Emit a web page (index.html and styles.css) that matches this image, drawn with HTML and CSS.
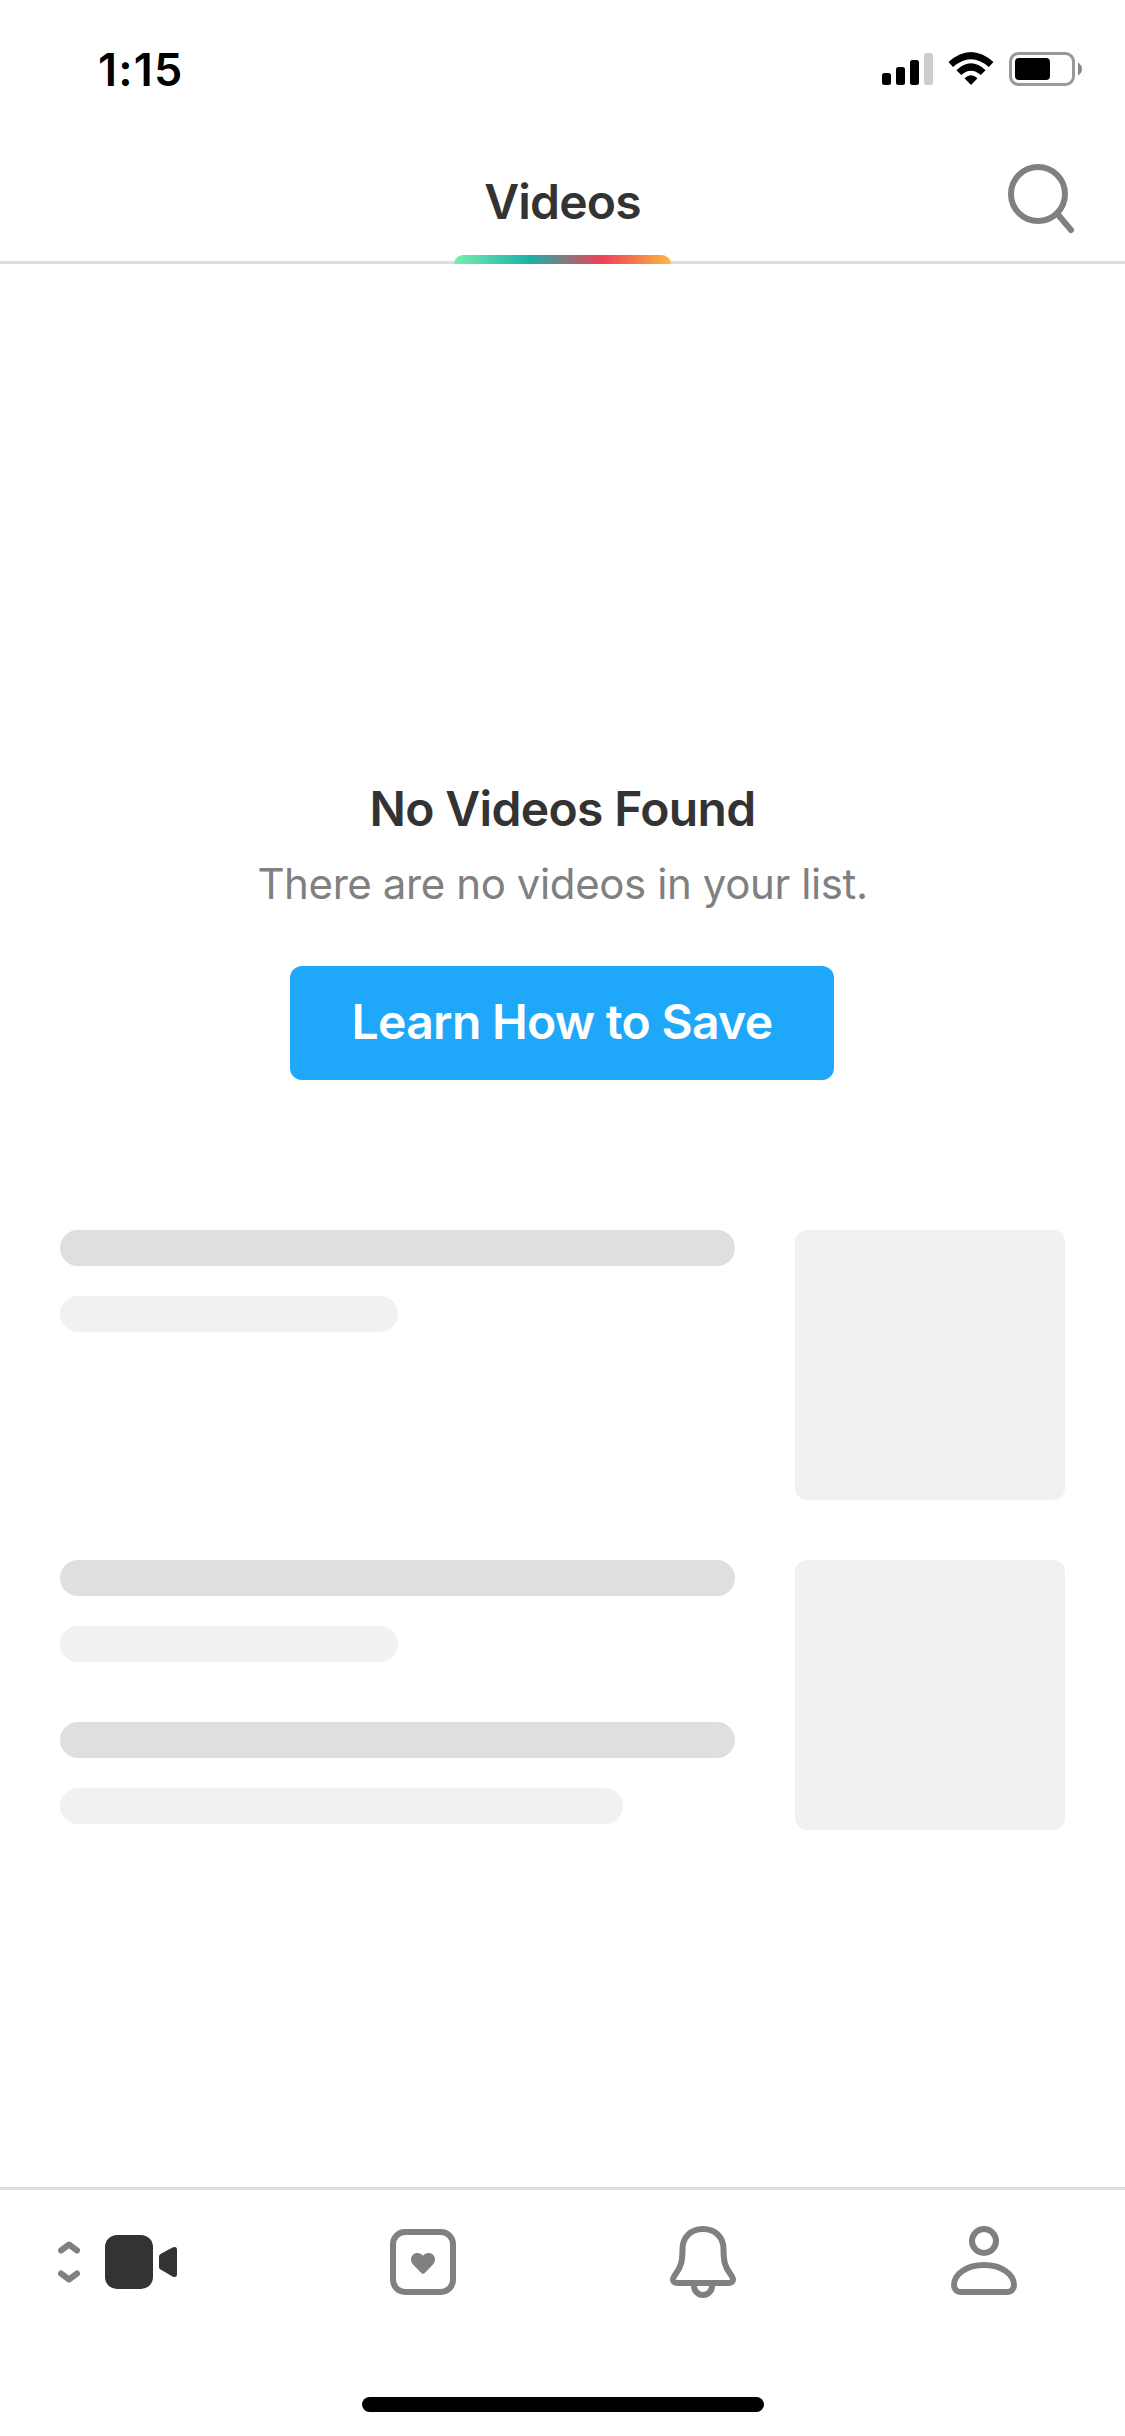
FILE: index.html
```html
<!DOCTYPE html>
<html lang="en">
<head>
<meta charset="utf-8">
<title>Videos</title>
<link rel="stylesheet" href="styles.css">
</head>
<body>
<div class="screen">
  <div class="status">
    <span class="time">1:15</span>
    <svg class="indicators" width="200" height="34" viewBox="882 52 200 34">
      <rect x="882" y="73" width="9" height="12" rx="2.5"/>
      <rect x="896" y="67" width="9" height="18" rx="2.5"/>
      <rect x="910" y="60" width="9" height="25" rx="2.5"/>
      <rect x="924" y="53" width="9" height="32" rx="2.5" fill="#ccc"/>
      <path d="M948.5 62Q970.8 42 993.5 62L988.8 67Q971 51.500 953 67ZM956.500 70.200Q971 56.500 985.500 70.200L980.800 75Q971 66.500 961.200 75ZM964.500 78.200Q971 72.500 977.500 78.200L971 85Z"/>
      <rect x="1010.500" y="53.500" width="63" height="31" rx="8" fill="none" stroke="#999" stroke-width="3"/>
      <rect x="1015" y="58" width="35" height="22" rx="4"/>
      <path d="M1078 62.500Q1082 65 1082 69T1078 75.500Z" fill="#888"/>
    </svg>
  </div>
  <header class="header">
    <h1 class="tab">Videos</h1>
    <svg class="search" width="72" height="72" viewBox="1005 162 72 72">
      <circle cx="1038" cy="194" r="27"/>
      <path d="M1057 213.500L1071 230"/>
    </svg>
  </header>
  <main class="content">
    <h2 class="empty-title">No Videos Found</h2>
    <p class="empty-text">There are no videos in your list.</p>
    <button class="learn"><span class="learn-label">Learn How to Save</span></button>
    <div class="skeletons">
      <div class="item">
        <div class="lines"><i class="line dark"></i><i class="line half"></i></div>
        <div class="thumb"></div>
      </div>
      <div class="item">
        <div class="lines"><i class="line dark"></i><i class="line half"></i><i class="line dark second"></i><i class="line long"></i></div>
        <div class="thumb"></div>
      </div>
    </div>
  </main>
  <nav class="nav">
    <a class="nav-item first">
      <svg width="120" height="72" viewBox="58 2226 120 72">
        <path class="stroke" d="M61 2250.500L69 2244.500L77 2250.500M61 2273.500L69 2279.500L77 2273.500"/>
        <rect x="105" y="2235" width="48" height="54" rx="12" fill="#333"/>
        <path d="M160.500 2254L173 2247.300Q177 2246 177 2250V2274Q177 2278 173 2276.700L160.500 2269.500Q159 2268.500 159 2267V2256.500Q159 2255 160.500 2254Z" fill="#333"/>
      </svg>
    </a>
    <a class="nav-item">
      <svg width="66" height="72" viewBox="390 2226 66 72">
        <rect class="stroke" x="393" y="2232" width="60" height="60" rx="12"/>
        <path d="M423 2273.700Q421.800 2273.700 421 2272.800L412.800 2264.200C410.500 2261.500 410.400 2257.500 412.800 2255C415.600 2252.200 420.300 2252.400 423 2255.700C425.700 2252.400 430.400 2252.200 433.200 2255C435.600 2257.500 435.500 2261.500 433.200 2264.200L425 2272.800Q424.200 2273.700 423 2273.700Z" fill="#808080"/>
      </svg>
    </a>
    <a class="nav-item">
      <svg width="66" height="72" viewBox="670 2226 66 72">
        <path class="stroke" d="M703 2229C690 2229 682.500 2238 682.500 2249C682.500 2261 681 2267 676 2273.500C674.500 2275.500 673 2277.500 673 2279.500C673 2281.500 674.500 2283 677 2283H729C731.500 2283 733 2281.500 733 2279.500C733 2277.500 731.500 2275.500 730 2273.500C725 2267 723.500 2261 723.500 2249C723.500 2238 716 2229 703 2229Z"/>
        <path class="stroke" d="M694 2283V2286A9 9 0 0 0 712 2286V2283"/>
      </svg>
    </a>
    <a class="nav-item">
      <svg width="66" height="72" viewBox="951 2226 66 72">
        <circle class="stroke" cx="984" cy="2241" r="12"/>
        <path class="stroke" d="M960 2292H1008C1011 2292 1014 2289 1014 2285C1014 2274 1001 2265 984 2265S954 2274 954 2285C954 2289 957 2292 960 2292Z"/>
      </svg>
    </a>
  </nav>
  <div class="home"></div>
</div>
</body>
</html>
```
FILE: styles.css
```css
* { box-sizing: border-box; }
body { margin: 0; background: #fff; font-family: Inter, "Liberation Sans", sans-serif; color: #333; }
.screen { width: 1125px; height: 2436px; display: flex; flex-direction: column; background: #fff; }
.status { height: 138px; display: flex; justify-content: space-between; align-items: center; padding: 0 43px 0 98px; color: #000; }
.time { font-size: 45px; line-height: 60px; font-weight: 600; letter-spacing: 1.2px; padding-top: 1px; }
.header { height: 126px; border-bottom: 3px solid #dedede; display: grid; grid-template-columns: 454px 217px 1fr; padding-top: 24px; }
.tab { grid-column: 2; height: 102px; margin: 0; padding-top: 9.500px; font-size: 48px; line-height: 60px; font-weight: 560; letter-spacing: -0.8px; text-align: center; white-space: nowrap; display: flex; flex-direction: column; justify-content: space-between; }
.tab::after { content: ""; display: block; height: 9px; border-radius: 9px 9px 0 0; background: linear-gradient(90deg, #77edb0 0%, #1cb0a8 35%, #ee4056 68%, #fcb643 100%); }
.search { margin-left: 334px; fill: none; stroke: #808080; stroke-width: 6; stroke-linecap: round; }
.content { height: 1923px; display: flex; flex-direction: column; align-items: center; padding-top: 515px; }
.empty-title { margin: 0; font-size: 48px; line-height: 60px; font-weight: 600; letter-spacing: -0.65px; white-space: nowrap; }
.empty-text { margin: 15px 0 0; font-size: 42px; line-height: 60px; font-weight: 400; letter-spacing: -0.4px; color: #808080; white-space: nowrap; }
.learn { width: 544px; height: 114px; margin: 52px 1px 0 0; padding: 0 0 3px; border: 0; border-radius: 12px; background: #1fa8fa; color: #fff; font: 560 48px/60px Inter, "Liberation Sans", sans-serif; letter-spacing: -0.7px; white-space: nowrap; }
.skeletons { width: 1005px; margin-top: 150px; display: flex; flex-direction: column; gap: 60px; }
.item { display: flex; justify-content: space-between; }
.lines { width: 675px; display: flex; flex-direction: column; gap: 30px; }
.line { height: 36px; border-radius: 18px; background: #f1f1f1; }
.dark { background: #dfdfdf; }
.half { width: 338px; }
.long { width: 563px; }
.second { margin-top: 30px; }
.thumb { width: 270px; height: 270px; border-radius: 12px; background: #f1f1f1; }
.nav { height: 210px; border-top: 3px solid #dedede; display: grid; grid-template-columns: 283px 280px 280px 282px; padding-top: 36px; }
.nav-item { display: flex; justify-content: center; }
.first { justify-content: flex-start; padding-left: 58px; }
.stroke { fill: none; stroke: #808080; stroke-width: 6; stroke-linecap: round; stroke-linejoin: round; }
.home { width: 402px; height: 15px; border-radius: 8px; background: #000; align-self: center; }
```
